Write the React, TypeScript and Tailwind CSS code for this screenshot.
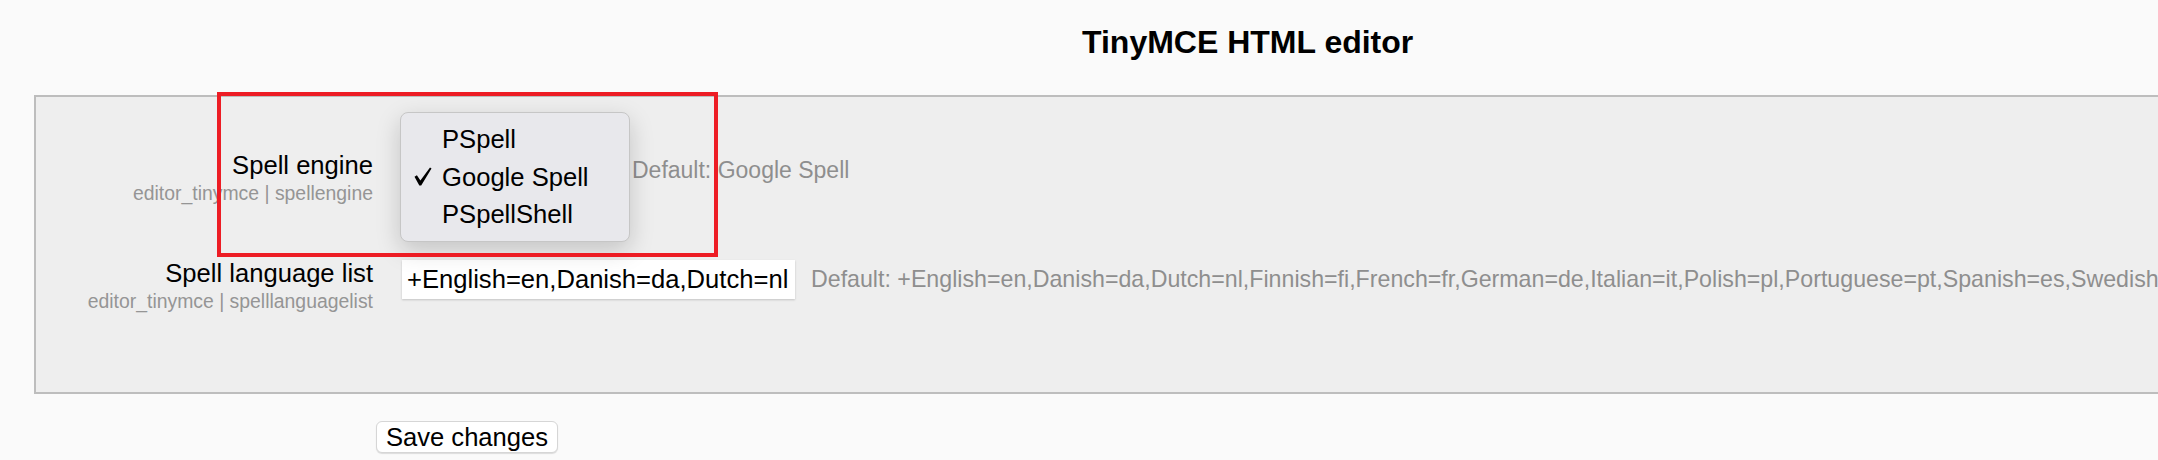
const LANGS =
  '+English=en,Danish=da,Dutch=nl,Finnish=fi,French=fr,German=de,Italian=it,Polish=pl,Portuguese=pt,Spanish=es,Swedish=sv';

function SettingLabel({ title, name }: { title: string; name: string }) {
  return (
    <div className="w-[337px] shrink-0 text-right">
      <div className="text-[25.6px] leading-[30px]">{title}</div>
      <div className="mt-[1px] text-[19.4px] leading-[24px] text-[#959595]">{name}</div>
    </div>
  );
}

function SpellEngineMenu() {
  const options = ['PSpell', 'Google Spell', 'PSpellShell'];
  return (
    <div className="absolute top-[-38px] left-0 h-[130px] w-[230px] rounded-[8px] border border-[#c6c6c6] bg-[#e8e8ec] pt-[8px] pl-[41px] shadow-[0_8px_24px_rgba(0,0,0,0.18)]">
      {options.map((opt) => (
        <div key={opt} className="text-[25.6px] leading-[37.5px] whitespace-nowrap">
          {opt}
        </div>
      ))}
      <svg className="absolute top-[54px] left-[13px]" width="18" height="19" viewBox="0 0 18 19">
        <path d="M0.5 9.8 L2.9 8.3 L6.4 13.6 L16 0.6 L17.5 1.4 L7.2 18.6 L5.3 18.6 Z" fill="#000" />
      </svg>
    </div>
  );
}

export default function App() {
  return (
    <div className="min-h-[460px] w-full overflow-hidden bg-[#fafafa] pt-[24px] font-['Liberation_Sans',Arial,sans-serif] text-black">
      <h2 className="pl-[1082px] text-[32px] leading-[37px] font-bold whitespace-nowrap">TinyMCE HTML editor</h2>

      <div className="relative mt-[34px] ml-[34px] h-[299px] w-[2300px] border-2 border-[#bdbdbd] bg-[#eeeeee] pt-[53px]">
        <div className="flex h-[108px] items-start">
          <SettingLabel title="Spell engine" name="editor_tinymce | spellengine" />
          <div className="relative ml-[27px] h-[40px] w-[232px] shrink-0">
            <SpellEngineMenu />
          </div>
          <div className="mt-[6px] text-[23px] leading-[28px] whitespace-nowrap text-[#8e8e8e]">
            Default: Google Spell
          </div>
        </div>

        <div className="flex items-start">
          <SettingLabel title="Spell language list" name="editor_tinymce | spelllanguagelist" />
          <input
            readOnly
            value="+English=en,Danish=da,Dutch=nl"
            className="mt-[2px] ml-[29px] h-[39px] w-[393px] shrink-0 bg-white px-[5px] text-[25.6px] text-black shadow-[0_1px_2px_rgba(0,0,0,0.18)] outline-none"
          />
          <div className="mt-[7px] ml-[16px] text-[23.2px] leading-[28px] whitespace-nowrap text-[#8e8e8e]">
            Default: {LANGS}
          </div>
        </div>

        <div className="pointer-events-none absolute top-[-5px] left-[181px] h-[165px] w-[501px] border-4 border-[#ed1c24]" />
      </div>

      <div className="mt-[27px] ml-[376px]">
        <button className="h-[32px] w-[182px] rounded-[6px] border border-[#d6d6d6] bg-white text-[25.6px] leading-[30px] shadow-[0_1px_1px_rgba(0,0,0,0.12)]">
          Save changes
        </button>
      </div>
    </div>
  );
}
